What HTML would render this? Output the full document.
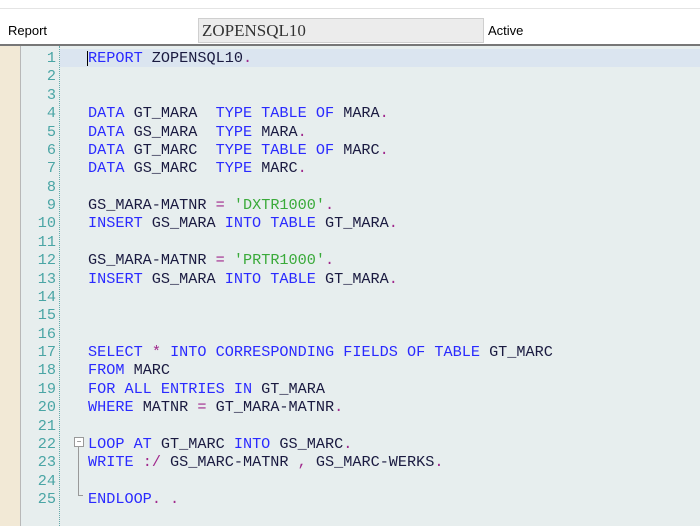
<!DOCTYPE html>
<html><head><style>
body{margin:0;width:700px;height:524px;overflow:hidden;background:#fff;font-family:"Liberation Sans",sans-serif;position:relative}
.top{position:absolute;left:0;top:0;width:700px;height:8px;background:#fff;border-bottom:1px solid #e4e4e4}
.lbl{position:absolute;font-size:13px;color:#000}
.inp{position:absolute;left:198px;top:18px;background:#ececec;border:1px solid #cfcfcf;font-family:"Liberation Serif",serif;font-size:17px;color:#333;line-height:23px;padding-left:3px;box-sizing:border-box;width:286px;height:25px}
.ed{position:absolute;left:0;top:44px;width:700px;height:480px;background:#e7eeee;border-top:2px solid #777;overflow:hidden}
.gut{position:absolute;left:0;top:0;width:20px;height:480px;background:#f2e9d6;border-right:1px solid #b8b8b8}
.dot{position:absolute;left:59px;top:0;height:480px;border-left:1px dotted #6aa}
.hl{position:absolute;left:60px;top:3px;width:640px;height:18px;background:#dbe5f0}
.nums,.code{position:absolute;top:3px;font-family:"Liberation Mono",monospace;font-size:15.2px;line-height:18.375px;white-space:pre}
.nums{left:22px;width:34px;text-align:right;color:#4aa5a5}
.code{left:88px;color:#1a1a40}
.k{color:#2a2aff}.s{color:#3aaa3a}.p{color:#a0288c}
.fold{position:absolute;left:74px;top:391px;width:8px;height:8px;border:1px solid #999;background:#fff;font-size:8px;line-height:7px;text-align:center;color:#555}
.vl{position:absolute;left:78px;top:401px;height:48px;border-left:1px solid #999}
.vh{position:absolute;left:78px;top:449px;width:5px;border-top:1px solid #999}
.cur{position:absolute;left:87px;top:5px;width:1px;height:15px;background:#000}
</style></head><body>
<div class="top"></div>
<div class="lbl" style="left:8px;top:23px">Report</div>
<div class="inp">ZOPENSQL10</div>
<div class="lbl" style="left:488px;top:23px">Active</div>
<div class="ed">
<div class="gut"></div>
<div class="hl"></div>
<div class="dot"></div>
<div class="nums">1
2
3
4
5
6
7
8
9
10
11
12
13
14
15
16
17
18
19
20
21
22
23
24
25</div>
<div class="code"><span class="k">REPORT</span> ZOPENSQL10<span class="p">.</span>


<span class="k">DATA</span> GT_MARA  <span class="k">TYPE TABLE OF</span> MARA<span class="p">.</span>
<span class="k">DATA</span> GS_MARA  <span class="k">TYPE</span> MARA<span class="p">.</span>
<span class="k">DATA</span> GT_MARC  <span class="k">TYPE TABLE OF</span> MARC<span class="p">.</span>
<span class="k">DATA</span> GS_MARC  <span class="k">TYPE</span> MARC<span class="p">.</span>

GS_MARA-MATNR <span class="p">=</span> <span class="s">'DXTR1000'</span><span class="p">.</span>
<span class="k">INSERT</span> GS_MARA <span class="k">INTO TABLE</span> GT_MARA<span class="p">.</span>

GS_MARA-MATNR <span class="p">=</span> <span class="s">'PRTR1000'</span><span class="p">.</span>
<span class="k">INSERT</span> GS_MARA <span class="k">INTO TABLE</span> GT_MARA<span class="p">.</span>



<span class="k">SELECT</span> <span class="p">*</span> <span class="k">INTO CORRESPONDING FIELDS OF TABLE</span> GT_MARC
<span class="k">FROM</span> MARC
<span class="k">FOR ALL ENTRIES IN</span> GT_MARA
<span class="k">WHERE</span> MATNR <span class="p">=</span> GT_MARA-MATNR<span class="p">.</span>

<span class="k">LOOP AT</span> GT_MARC <span class="k">INTO</span> GS_MARC<span class="p">.</span>
<span class="k">WRITE</span> <span class="p">:/</span> GS_MARC-MATNR <span class="p">,</span> GS_MARC-WERKS<span class="p">.</span>

<span class="k">ENDLOOP</span><span class="p">. .</span></div>
<div class="cur"></div>
<div class="fold">−</div><div class="vl"></div><div class="vh"></div>
</div>
</body></html>
